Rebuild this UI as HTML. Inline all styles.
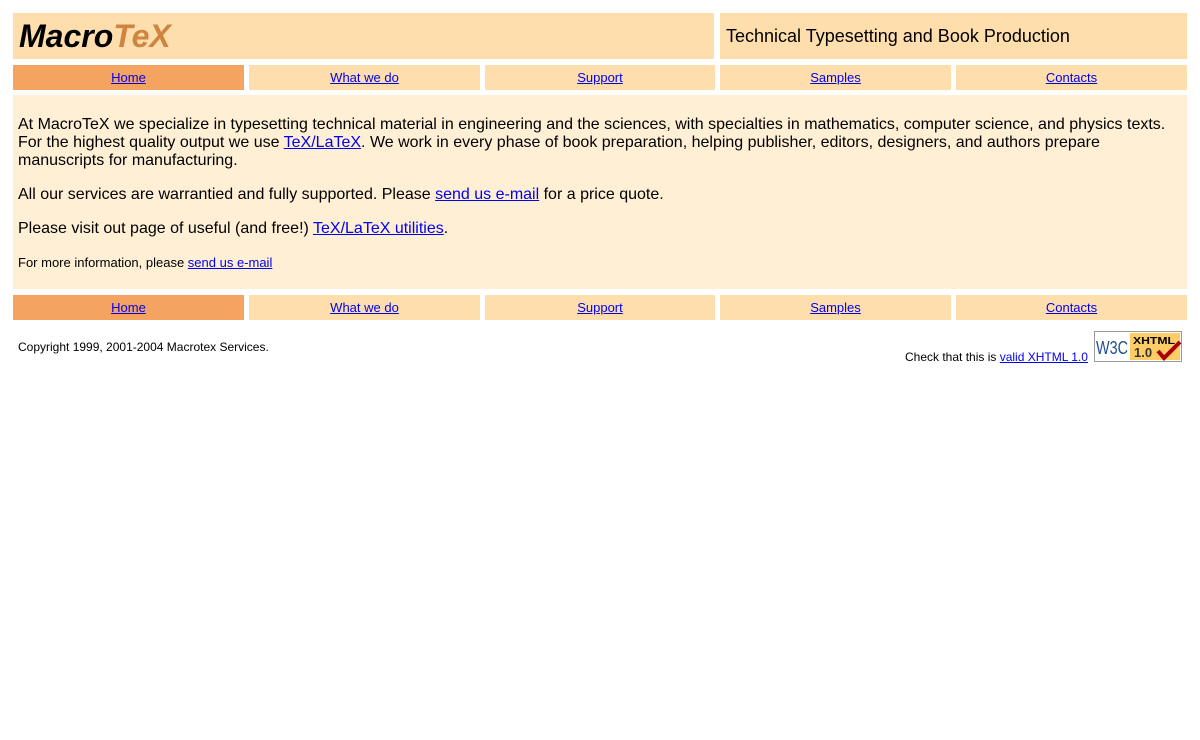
<!DOCTYPE html>
<html><head><meta charset="utf-8"><style>
body{margin:0;background:#fff;font-family:"Liberation Sans",Arial,sans-serif;color:#000;width:1200px;height:740px;position:relative;overflow:hidden}
a{color:#0000ee}
.b{position:absolute}
.h{background:#ffdead}
.nav{height:25px;font-size:13px;text-align:center;line-height:25px;background:#ffdead}
.nav.on{background:#f4a460}
p{margin:0}
</style></head><body>
<div class="b h" style="left:13px;top:13px;width:701px;height:46px"><span style="position:absolute;left:6px;top:4px;font-size:32px;font-weight:bold;font-style:italic;line-height:38px">Macro<span style="color:#cd853f">TeX</span></span></div>
<div class="b h" style="left:720px;top:13px;width:467px;height:46px;font-size:18px;line-height:46px"><span style="margin-left:6px">Technical Typesetting and Book Production</span></div>

<div class="b nav on" style="left:13px;top:65px;width:231px"><a href="#">Home</a></div>
<div class="b nav" style="left:249px;top:65px;width:231px"><a href="#">What we do</a></div>
<div class="b nav" style="left:485px;top:65px;width:230px"><a href="#">Support</a></div>
<div class="b nav" style="left:720px;top:65px;width:231px"><a href="#">Samples</a></div>
<div class="b nav" style="left:956px;top:65px;width:231px"><a href="#">Contacts</a></div>

<div class="b" style="left:13px;top:95px;width:1174px;height:194px;background:#ffefd5">
<div style="position:absolute;left:5px;top:21px;width:1165px;font-size:16px;line-height:18px">
<p>At MacroTeX we specialize in typesetting technical material in engineering and the sciences, with specialties in mathematics, computer science, and physics texts. For the highest quality output we use <a href="#">TeX/LaTeX</a>. We work in every phase of book preparation, helping publisher, editors, designers, and authors prepare manuscripts for manufacturing.</p>
<p style="margin-top:16px">All our services are warrantied and fully supported. Please <a href="#">send us e-mail</a> for a price quote.</p>
<p style="margin-top:16px">Please visit out page of useful (and free!) <a href="#">TeX/LaTeX utilities</a>.</p>
<p style="margin-top:16px;font-size:13px">For more information, please <a href="#">send us e-mail</a></p>
</div></div>

<div class="b nav on" style="left:13px;top:295px;width:231px"><a href="#">Home</a></div>
<div class="b nav" style="left:249px;top:295px;width:231px"><a href="#">What we do</a></div>
<div class="b nav" style="left:485px;top:295px;width:230px"><a href="#">Support</a></div>
<div class="b nav" style="left:720px;top:295px;width:231px"><a href="#">Samples</a></div>
<div class="b nav" style="left:956px;top:295px;width:231px"><a href="#">Contacts</a></div>

<div class="b" style="left:18px;top:340px;font-size:12px">Copyright 1999, 2001-2004 Macrotex Services.</div>
<div class="b" style="left:905px;top:350px;font-size:12px">Check that this is <a href="#">valid XHTML 1.0</a></div>
<svg class="b" style="left:1094px;top:331px" width="88" height="31" viewBox="0 0 88 31">
<rect x="0.5" y="0.5" width="87" height="30" fill="#fff" stroke="#999"/>
<rect x="36" y="2" width="50" height="27" fill="#fc6"/>
<text x="2" y="23" font-family="Liberation Sans" font-size="18" fill="#1f4f8f" textLength="32" lengthAdjust="spacingAndGlyphs">W3C</text>
<text x="39" y="13" font-family="Liberation Sans" font-size="10" font-weight="bold" textLength="42" lengthAdjust="spacingAndGlyphs">XHTML</text>
<text x="40" y="26" font-family="Liberation Sans" font-size="13" font-weight="bold" fill="#333">1.0</text>
<path d="M64 20 L70 27 L86 11" stroke="#a00" stroke-width="4" fill="none"/>
</svg>
</body></html>
